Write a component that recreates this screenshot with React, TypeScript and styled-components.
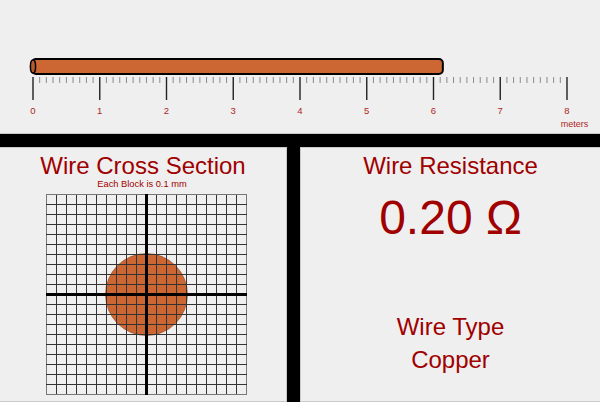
import React from "react";
import styled, { createGlobalStyle } from "styled-components";

const GlobalStyle = createGlobalStyle`
  html, body {
    margin: 0;
    padding: 0;
    background: #000;
  }
  body {
    font-family: "Liberation Sans", Arial, sans-serif;
  }
`;

const RED = "#a00000";
const COPPER = "#cc6633";

const Board = styled.div`
  width: 600px;
  height: 402px;
  display: grid;
  grid-template-rows: 134px 1fr;
  row-gap: 13px;
  background: #000;
  overflow: hidden;
`;

const Panel = styled.div`
  background: #efefef;
  box-sizing: border-box;
  border: 1px solid #c9c9c9;
`;

const TopPanel = styled(Panel)`
  border-top: none;
  border-left: none;
  border-right: none;
  padding: 49px 0 0 20px;
`;

const BottomRow = styled.div`
  display: grid;
  grid-template-columns: 287px 1fr;
  column-gap: 13px;
`;

const SectionPanel = styled(Panel)`
  display: flex;
  flex-direction: column;
  align-items: center;
  padding-top: 5px;
  border-left: none;
`;

const InfoPanel = styled(Panel)`
  display: flex;
  flex-direction: column;
  align-items: center;
  padding-top: 5px;
  border-right: none;
`;

const Title = styled.div`
  color: ${RED};
  font-size: 24px;
  line-height: 26px;
  white-space: nowrap;
`;

const Caption = styled.div`
  color: ${RED};
  font-size: 9.3px;
  line-height: 10px;
  margin-right: 2px;
`;

const GridBox = styled.svg`
  display: block;
  align-self: flex-start;
  margin: 5px 0 0 46px;
`;

const Value = styled.div`
  color: ${RED};
  font-size: 48px;
  line-height: 56px;
  margin-top: 11px;
`;

const TypeBlock = styled.div`
  margin-top: 64px;
  display: flex;
  flex-direction: column;
  align-items: center;
`;

const TypeLine = styled.div`
  color: ${RED};
  font-size: 24px;
  line-height: 33px;
`;

// meter ruler with the wire laid on top of it
const Ruler: React.FC<{ length: number }> = ({ length }) => {
  const ox = 13; // x of the 0 mark inside the svg
  const step = 6.675; // px per 0.1 m
  const ticks = Array.from({ length: 81 }, (_, i) => i);
  const wireEnd = ox + length * step * 10;
  return (
    <svg width="580" height="84" viewBox="0 0 580 84">
      <rect
        x={ox - 1}
        y={10}
        width={wireEnd - ox + 1}
        height={15}
        rx={4}
        fill={COPPER}
        stroke="#000"
        strokeWidth={2}
      />
      <ellipse cx={ox} cy={17.5} rx={2.6} ry={6.5} fill="#b8592a" stroke="#000" strokeWidth={1.5} />
      {ticks.map((i) => {
        const x = ox + i * step;
        const major = i % 10 === 0;
        return (
          <line
            key={i}
            x1={x}
            x2={x}
            y1={28}
            y2={major ? 51 : 34}
            stroke={major ? "#222" : "#8a8a8a"}
            strokeWidth={major ? 1.4 : 1}
          />
        );
      })}
      {ticks
        .filter((i) => i % 10 === 0)
        .map((i) => (
          <text
            key={i}
            x={ox + i * step}
            y={64.5}
            fill="#b01e1e"
            fontSize="9.5"
            textAnchor="middle"
            fontFamily="Liberation Sans, Arial, sans-serif"
          >
            {i / 10}
          </text>
        ))}
      <text
        x={554.5}
        y={78}
        fill="#b01e1e"
        fontSize="9"
        textAnchor="middle"
        fontFamily="Liberation Sans, Arial, sans-serif"
      >
        meters
      </text>
    </svg>
  );
};

// 20 x 20 blocks, 0.1 mm each, with the wire's cross section under the lines
const CrossSection: React.FC<{ radius: number }> = ({ radius }) => {
  const cell = 10;
  const n = 20;
  const size = cell * n + 1;
  const mid = (n / 2) * cell + 0.5;
  const lines = Array.from({ length: n + 1 }, (_, i) => i * cell + 0.5);
  const edge = (i: number) => i === 0 || i === n;
  return (
    <GridBox width={size} height={size} viewBox={`0 0 ${size} ${size}`}>
      <circle cx={mid} cy={mid} r={radius} fill={COPPER} stroke="#8c4520" strokeWidth={0.6} />
      {lines.map((p, i) => (
        <line key={`v${i}`} x1={p} x2={p} y1={0} y2={size} stroke={edge(i) ? "#777" : "#333"} strokeWidth={1} />
      ))}
      {lines.map((p, i) => (
        <line key={`h${i}`} x1={0} x2={size} y1={p} y2={p} stroke={edge(i) ? "#777" : "#333"} strokeWidth={1} />
      ))}
      <line x1={mid} x2={mid} y1={0} y2={size} stroke="#000" strokeWidth={3} />
      <line x1={0} x2={size} y1={mid} y2={mid} stroke="#000" strokeWidth={3} />
    </GridBox>
  );
};

const App: React.FC = () => {
  const lengthMeters = 6.14;
  const resistance = 0.2;

  return (
    <>
      <GlobalStyle />
      <Board>
        <TopPanel>
          <Ruler length={lengthMeters} />
        </TopPanel>
        <BottomRow>
          <SectionPanel>
            <Title>Wire Cross Section</Title>
            <Caption>Each Block is 0.1 mm</Caption>
            <CrossSection radius={41} />
          </SectionPanel>
          <InfoPanel>
            <Title>Wire Resistance</Title>
            <Value>{resistance.toFixed(2)} Ω</Value>
            <TypeBlock>
              <TypeLine>Wire Type</TypeLine>
              <TypeLine>Copper</TypeLine>
            </TypeBlock>
          </InfoPanel>
        </BottomRow>
      </Board>
    </>
  );
};

export default App;
